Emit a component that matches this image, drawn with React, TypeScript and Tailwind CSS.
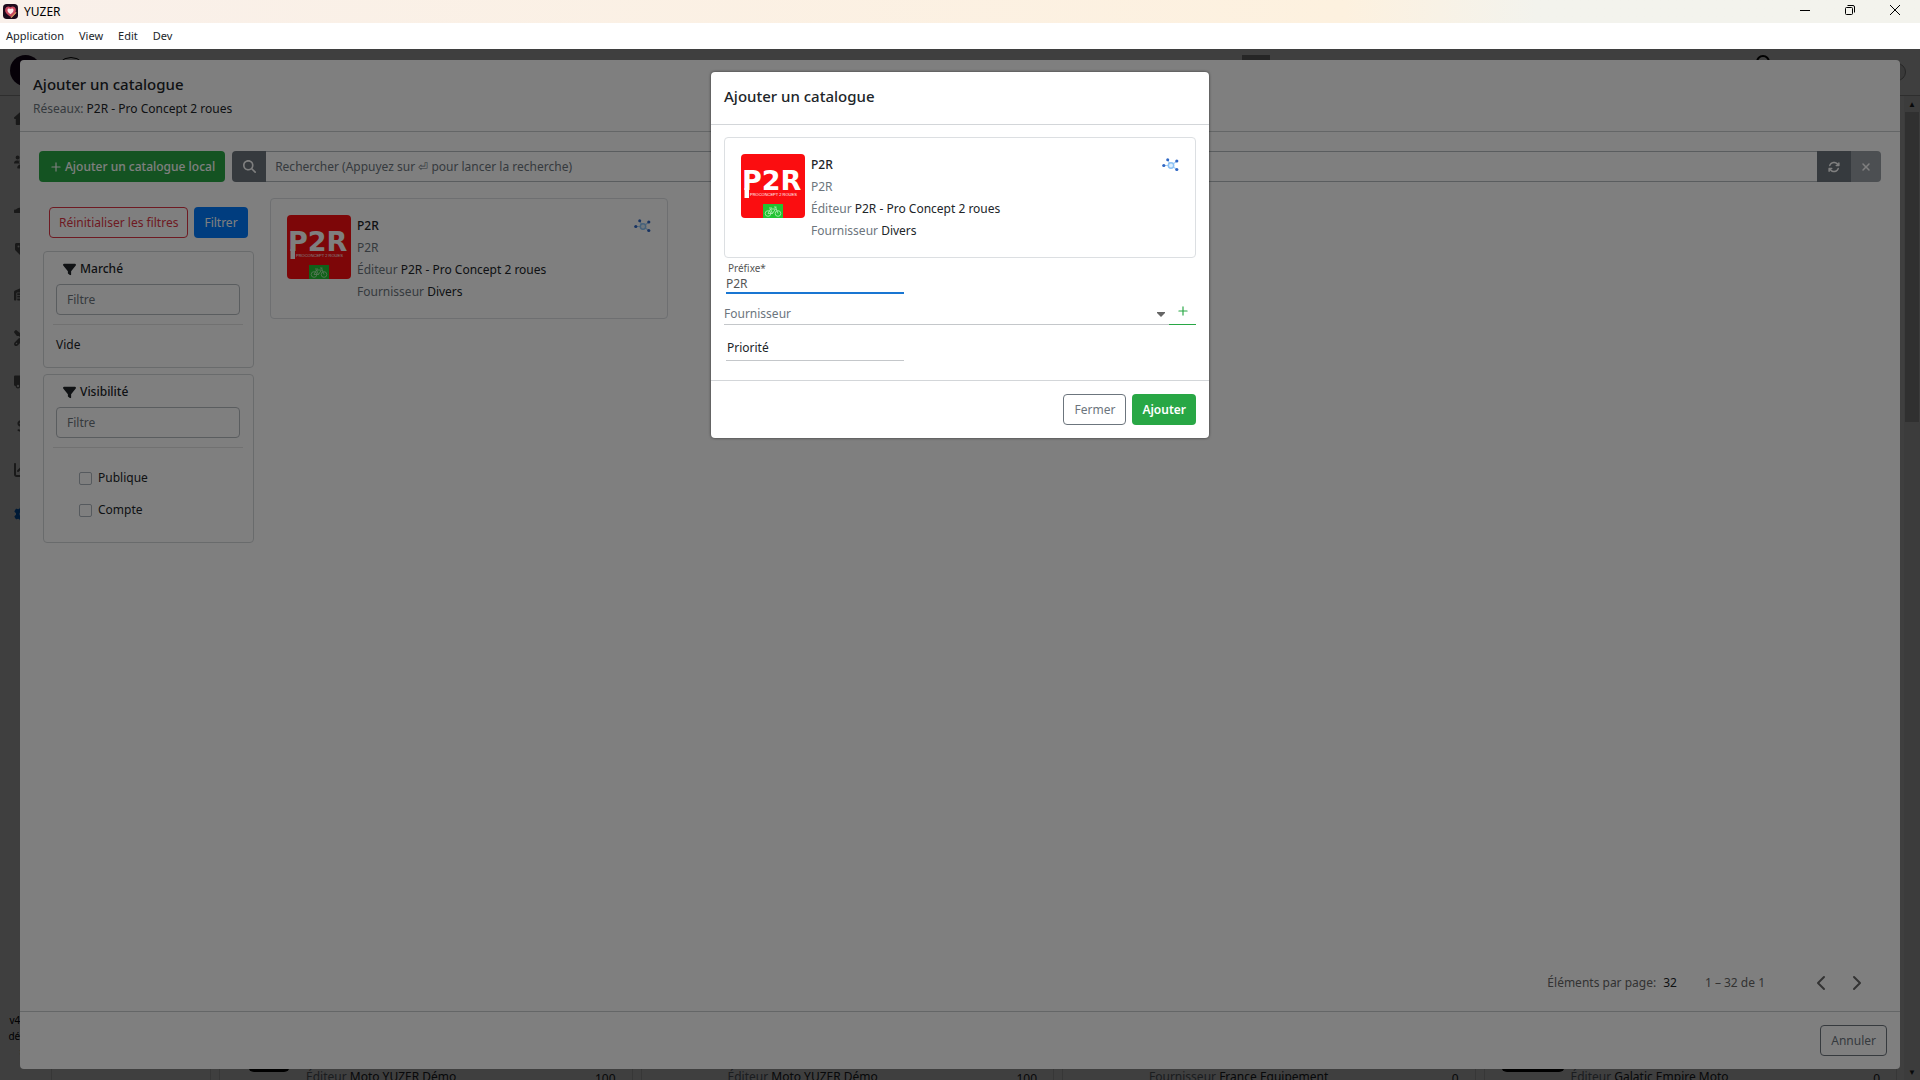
import { useState } from 'react';
import type { ReactNode } from 'react';
import clsx from 'clsx';
import {
  FaArrowsRotate, FaChartLine, FaDollarSign, FaFilter, FaGear, FaHandHoldingDollar, FaHouse, FaMagnifyingGlass,
  FaScrewdriverWrench, FaTag, FaTruck, FaUsers, FaWarehouse, FaXmark,
} from 'react-icons/fa6';
import { LuChevronLeft, LuChevronRight, LuPlus } from 'react-icons/lu';

const MENUS = ['Application', 'View', 'Edit', 'Dev'];

const NAV = [
  { name: 'Accueil', icon: FaHouse },
  { name: 'Clients', icon: FaUsers },
  { name: 'Ventes', icon: FaHandHoldingDollar },
  { name: 'Articles', icon: FaTag },
  { name: 'Stock', icon: FaWarehouse },
  { name: 'Atelier', icon: FaScrewdriverWrench },
  { name: 'Livraisons', icon: FaTruck },
  { name: 'Comptes', icon: FaDollarSign },
  { name: 'Statistiques', icon: FaChartLine },
  { name: 'Configuration', icon: FaGear, active: true },
];

const CATALOGUES = [
  { label: 'Éditeur', value: 'Moto YUZER Démo', count: 100, image: 'short' },
  { label: 'Éditeur', value: 'Moto YUZER Démo', count: 100 },
  { label: 'Fournisseur', value: 'France Equipement', count: 0 },
  { label: 'Éditeur', value: 'Galatic Empire Moto', count: 0, image: 'round' },
];

function AppIcon() {
  return (
    <svg viewBox="0 0 16 16" className="size-[15px]" aria-hidden="true">
      <rect width="16" height="16" rx="4" fill="#1d0b1c" />
      <path d="M8 13.5C3.5 10.5 2 8.500 2.300 6 2.600 3.200 5.600 1.800 8 3.500c2.400-1.700 5.400-.300 5.700 2.500.300 2.500-1.200 4.500-5.700 7.500z" fill="#c9485f" />
      <path d="M8 11C5.500 9 4.500 7.500 4.800 6c.400-1.500 2-1.700 3.200-.600 1.200-1.100 2.800-.900 3.200.600.300 1.500-.700 3-3.200 5z" fill="#ffe9ea" />
      <path d="M8.500 14.500l5.500-5.500" stroke="#f1a36b" strokeWidth="1.300" />
    </svg>
  );
}

function P2RLogo() {
  return (
    <svg viewBox="0 0 64 64" className="size-16 shrink-0 rounded-sm" role="img" aria-label="P2R">
      <rect width="64" height="64" fill="#fb0d10" />
      <text x="1" y="36" fontFamily="DejaVu Sans" fontWeight="700" fontSize="27" fill="#fff">P2R</text>
      <path d="M3.500 34h4.500v10h-4.500z" fill="#fff" />
      <text x="9" y="42" fontFamily="Liberation Sans" fontSize="4" fill="#fff">PROCONCEPT 2 ROUES</text>
      <rect x="22" y="50" width="20" height="14" fill="#22c332" />
      <g fill="none" stroke="#b6f0b8" strokeWidth=".8">
        <circle cx="27" cy="59.500" r="2.800" />
        <circle cx="37" cy="59.500" r="2.800" />
        <path d="M27 59.500l2.500-4.500h5l-3 4.500H27M29.500 55l2 4.500M34.500 53l2.500 6.500M33 53h2.500M28 54h3" />
      </g>
    </svg>
  );
}

function NetworkIcon() {
  return (
    <svg viewBox="0 0 17 14" className="mt-1 h-3.5 w-[17px] shrink-0" aria-hidden="true">
      <path d="M2 7.500h5M9 7.500L5.500 2M9 7.500L15 3M9 7.500l6 4" stroke="#a9d0f5" strokeWidth="1.200" />
      <circle cx="9" cy="7.500" r="2.700" fill="#dceefd" stroke="#8cc2f5" strokeWidth="1.500" />
      <g fill="#2f67c4">
        <circle cx="1.800" cy="7.500" r="1.600" />
        <circle cx="5.700" cy="1.800" r="1.500" />
        <circle cx="14.800" cy="3" r="1.600" />
        <circle cx="14.800" cy="11.500" r="1.600" />
      </g>
    </svg>
  );
}

function CatalogueCard() {
  return (
    <article className="flex items-start gap-1.5 rounded-sm border border-[#dcdfe2] px-4 pb-[15px] pt-4">
      <P2RLogo />
      <div className="flex-1 leading-[22px]">
        <h3 className="font-medium">P2R</h3>
        <p className="text-[#6c757d]">P2R</p>
        <p><span className="text-[#6c757d]">Éditeur</span> P2R - Pro Concept 2 roues</p>
        <p><span className="text-[#6c757d]">Fournisseur</span> Divers</p>
      </div>
      <NetworkIcon />
    </article>
  );
}

function FilterBox({ title, children }: { title: string; children: ReactNode }) {
  return (
    <section className="rounded-sm border border-[#d3d6d9] pl-[9px] pr-2.5 pt-[7px]">
      <h3 className="flex h-5 items-center gap-1 pl-2.5 font-medium">
        <FaFilter className="text-[13px]" />
        {title}
      </h3>
      <div className="mt-[5px] px-[3px]">
        <input
          aria-label={`Filtre ${title}`}
          placeholder="Filtre"
          className="h-[31px] w-full rounded-sm border border-[#b5babf] px-2.5 placeholder:text-[#6c757d]"
        />
      </div>
      <hr className="mt-[9px] border-[#e2e2e2]" />
      {children}
    </section>
  );
}

function BackgroundPage() {
  return (
    <div className="flex h-full flex-col bg-[#fcfcfc]">
      <header className="flex h-[47px] shrink-0 items-start border-b border-[#bbb] pl-2.5 pt-1.5">
        <span className="size-[31px] rounded-full bg-[#1a0420]" />
        <span className="ml-3.5 mt-0.5 size-8 rounded-full border border-black" />
        <span className="ml-auto mr-[486px] h-6 w-7 bg-[#999]" />
        <span className="mr-[118px] size-3.5 rounded-full border-2 border-black" />
        <span className="mr-3.5 mt-2 size-[18px] rounded-full border border-[#999] bg-[#e5e5e5]" />
      </header>
      <div className="flex min-h-0 flex-1">
        <nav className="flex w-11 shrink-0 flex-col items-center text-base text-[#666]">
          {NAV.map(({ name, icon: Icon, active }) => (
            <a key={name} href="#" aria-label={name} className={clsx('grid h-11 w-full place-items-center', active && 'text-[#0069d9]')}>
              <Icon />
            </a>
          ))}
          <p className="mt-auto pb-5 text-center text-[10px] leading-4 text-black">v4.12<br />démo<br />×</p>
        </nav>
        <div className="flex min-w-0 flex-1 items-end gap-2 overflow-hidden px-[7px]">
          <div className="h-full w-40 shrink-0 border-x border-[#ddd]" />
          <div className="grid h-full flex-1 grid-cols-4 gap-2">
            {CATALOGUES.map((item, i) => (
              <article key={i} className="flex items-end gap-1.5 border-x border-[#ddd] px-4">
                <span className="grid h-20 w-16 shrink-0 items-start">
                  {item.image === 'short' && <span className="ml-3 h-[72px] w-[42px] rounded-md bg-black" />}
                  {item.image === 'round' && (
                    <span className="grid h-[72px] place-items-center rounded-md bg-black">
                      <span className="size-14 rounded-full border-8 border-[#ddd]" />
                    </span>
                  )}
                </span>
                <p className="-mb-2 flex-1 leading-[22px]"><span className="text-[#6c757d]">{item.label}</span> {item.value}</p>
                <span className="-mb-2.5 leading-[22px]">{item.count}</span>
              </article>
            ))}
          </div>
        </div>
        <div className="flex w-4 shrink-0 flex-col items-center bg-[#f1f1f1] text-[8px]">
          <span className="h-4 leading-4">▲</span>
          <span className="h-[310px] w-3.5 bg-[#c1c1c1]" />
          <span className="mt-auto h-4 leading-4">▼</span>
        </div>
      </div>
    </div>
  );
}

function CatalogueListDialog() {
  return (
    <section role="dialog" aria-label="Ajouter un catalogue" className="flex min-h-0 flex-1 flex-col rounded-sm bg-white">
      <header className="border-b border-[#c9cccf] px-[13px] pb-3 pt-3">
        <h2 className="text-[15px] font-medium leading-6">Ajouter un catalogue</h2>
        <p className="mt-[3px] leading-5"><span className="text-[#6c757d]">Réseaux:</span> P2R - Pro Concept 2 roues</p>
      </header>

      <div className="flex min-h-0 flex-1 flex-col px-[19px] pb-3 pt-[19px]">
        <div className="flex gap-[7px]">
          <button className="flex h-[31px] items-center gap-0.5 rounded-sm bg-[#28a745] px-2.5 font-medium text-white">
            <LuPlus className="text-sm" />
            Ajouter un catalogue local
          </button>
          <div className="flex h-[31px] flex-1">
            <button aria-label="Rechercher" className="grid w-[34px] place-items-center rounded-l-sm bg-[#6c757d] text-[13px] text-white">
              <FaMagnifyingGlass />
            </button>
            <input
              aria-label="Rechercher un catalogue"
              placeholder="Rechercher (Appuyez sur ⏎ pour lancer la recherche)"
              className="min-w-0 flex-1 border-y border-[#b5babf] px-[9px] placeholder:text-[#6c757d]"
            />
            <button aria-label="Actualiser" className="grid w-[34px] place-items-center bg-[#6c757d] text-xs text-white">
              <FaArrowsRotate />
            </button>
            <button aria-label="Effacer" className="grid w-[30px] place-items-center rounded-r-sm bg-[#989ea4] text-xs text-white">
              <FaXmark />
            </button>
          </div>
        </div>

        <div className="flex min-h-0 flex-1 pt-4">
          <aside className="flex w-[219px] shrink-0 flex-col gap-1.5 px-1 pt-[9px]">
            <div className="mb-[7px] flex gap-1.5 whitespace-nowrap px-1.5">
              <button className="h-[31px] rounded-sm border border-[#dc3545] px-[9px] text-[#dc3545]">Réinitialiser les filtres</button>
              <button className="h-[31px] rounded-sm bg-[#007bff] px-2.5 text-white">Filtrer</button>
            </div>
            <FilterBox title="Marché">
              <p className="px-[3px] pb-3 pt-2.5 leading-5">Vide</p>
            </FilterBox>
            <FilterBox title="Visibilité">
              <div className="flex flex-col gap-3 pb-[22px] pl-[26px] pt-5">
                {['Publique', 'Compte'].map((name) => (
                  <label key={name} className="flex items-center gap-1.5 leading-5">
                    <input type="checkbox" className="size-[13px] appearance-none rounded-xs border border-[#adb5bd]" />
                    {name}
                  </label>
                ))}
              </div>
            </FilterBox>
          </aside>
          <div className="flex-1 pl-3">
            <div className="w-[398px]">
              <CatalogueCard />
            </div>
          </div>
        </div>

        <div className="flex h-8 items-center justify-end pr-3 text-[#666]">
          <span>Éléments par page:</span>
          <span className="ml-[7px] text-[#212529]">32</span>
          <span className="ml-7">1 – 32 de 1</span>
          <button aria-label="Page précédente" className="ml-11"><LuChevronLeft className="text-2xl" /></button>
          <button aria-label="Page suivante" className="ml-3"><LuChevronRight className="text-2xl" /></button>
        </div>
      </div>

      <footer className="flex justify-end border-t border-[#c9cccf] p-[13px]">
        <button className="h-[31px] rounded-sm border border-[#6c757d] px-2.5 text-[#6c757d]">Annuler</button>
      </footer>
    </section>
  );
}

function AddCatalogueDialog() {
  const [prefix, setPrefix] = useState('P2R');

  return (
    <form role="dialog" aria-label="Ajouter un catalogue" className="w-[498px] rounded-sm bg-white shadow-[0_0_3px_rgba(0,0,0,0.6)]">
      <header className="border-b border-[#d3d6d9] px-[13px] pb-4 pt-3">
        <h2 className="text-[15px] font-medium leading-6">Ajouter un catalogue</h2>
      </header>

      <div className="px-[13px] pb-[19px] pt-3">
        <CatalogueCard />
        <div className="ml-0.5 w-[178px] pt-[3px]">
          <label htmlFor="prefix" className="block pl-0.5 text-[10px] leading-[14px] text-[#555]">Préfixe*</label>
          <input
            id="prefix"
            value={prefix}
            onChange={(e) => setPrefix(e.target.value)}
            className="block h-[19px] w-full border-b-2 border-[#1976d2] text-[#555] outline-none"
          />
        </div>
        <div className="mt-2.5 flex h-[21px]">
          <div className="flex flex-1 items-center border-b border-[#c4c7ca]">
            <select aria-label="Fournisseur" className="h-full flex-1 appearance-none text-[#6c757d]">
              <option>Fournisseur</option>
            </select>
            <svg viewBox="0 0 8 5" className="mr-1 h-[5px] w-2" aria-hidden="true"><path d="M0 0h8v1L4 5 0 1z" fill="#666" /></svg>
          </div>
          <button type="button" aria-label="Ajouter un fournisseur" className="grid w-[27px] place-items-center border-b border-[#28a745] pb-1.5 text-sm text-[#28a745]">
            <LuPlus />
          </button>
        </div>
        <input
          aria-label="Priorité"
          placeholder="Priorité"
          className="ml-0.5 mt-2.5 block h-[26px] w-[178px] border-b border-[#c4c7ca] px-px outline-none placeholder:text-[#212529]"
        />
      </div>

      <footer className="flex justify-end gap-1.5 border-t border-[#d3d6d9] p-[13px]">
        <button type="button" className="h-[31px] rounded-sm border border-[#6c757d] px-2.5 text-[#6c757d]">Fermer</button>
        <button type="button" className="h-[31px] rounded-sm bg-[#28a745] px-2.5 font-semibold text-white">Ajouter</button>
      </footer>
    </form>
  );
}

export default function App() {
  return (
    <div className="flex h-screen flex-col overflow-hidden bg-white font-['Noto_Sans','Open_Sans',sans-serif] text-xs text-[#212529]">
      <div className="flex h-[23px] shrink-0 items-center bg-linear-to-r from-[#f9f0ea] via-[#fdf1df] via-70% to-[#f3f3ed] to-80% pl-[3px] text-black">
        <AppIcon />
        <span className="ml-1.5 flex-1">YUZER</span>
        <button aria-label="Réduire" className="grid h-5 w-[45px] place-items-center self-start">
          <svg viewBox="0 0 10 10" className="size-2.5"><path d="M0 5.500h10" stroke="#000" /></svg>
        </button>
        <button aria-label="Restaurer" className="grid h-5 w-[45px] place-items-center self-start">
          <svg viewBox="0 0 10 10" className="size-2.5" fill="none" stroke="#000">
            <rect x=".500" y="2.500" width="7" height="7" rx="1" />
            <path d="M2.500.500H8a1.500 1.500 0 0 1 1.500 1.500v5.500" />
          </svg>
        </button>
        <button aria-label="Fermer la fenêtre" className="mr-0.5 grid h-5 w-[46px] place-items-center self-start">
          <svg viewBox="0 0 10 10" className="size-2.5"><path d="M0 0l10 10M10 0L0 10" stroke="#000" /></svg>
        </button>
      </div>
      <div className="flex h-[26px] shrink-0 items-center gap-[15px] px-1.5 text-[11px]">
        {MENUS.map((menu) => <button key={menu}>{menu}</button>)}
      </div>

      <main className="relative min-h-0 flex-1">
        <BackgroundPage />
        <div className="absolute inset-0 flex flex-col bg-black/50 px-5 py-[11px]">
          <CatalogueListDialog />
        </div>
        <div className="absolute inset-0 flex items-start justify-center bg-black/50 pt-[23px]">
          <AddCatalogueDialog />
        </div>
      </main>
    </div>
  );
}
